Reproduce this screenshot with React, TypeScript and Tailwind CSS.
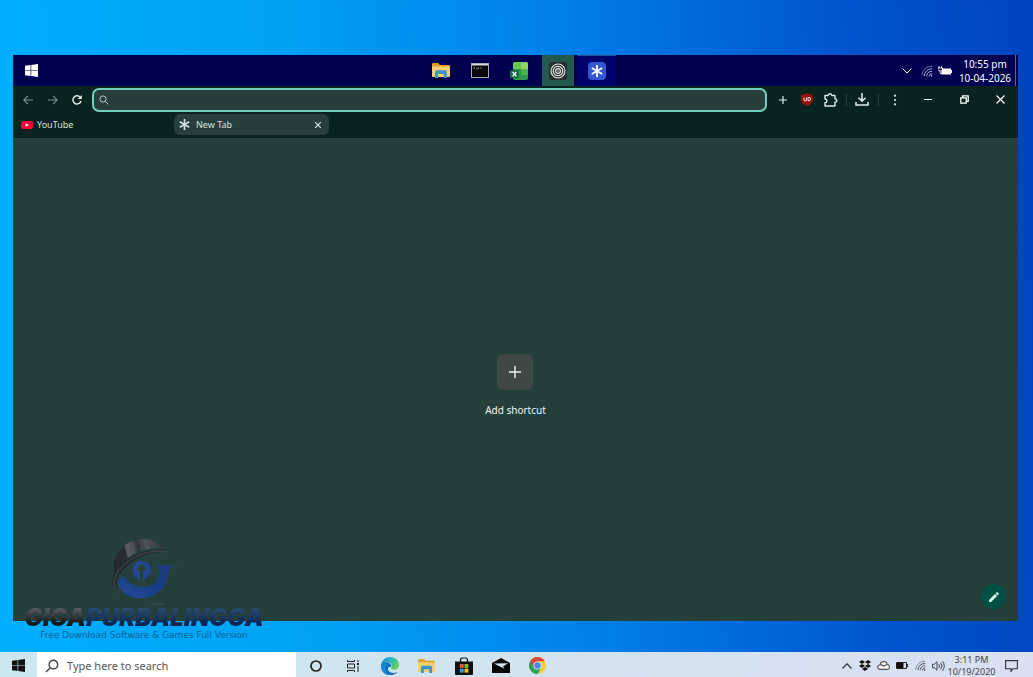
import React from "react";

type IconProps = { className?: string };

function WindowsLogo({ className }: IconProps) {
  return (
    <svg viewBox="0 0 14 14" className={className} fill="currentColor" aria-hidden="true">
      <path d="M0 2 6 1.1V6.6H0ZM6.7 1 14 0V6.6H6.7ZM0 7.3H6V12.8L0 12ZM6.7 7.3H14V14L6.7 12.9Z" />
    </svg>
  );
}

function FolderIcon({ className }: IconProps) {
  return (
    <svg viewBox="0 0 18 15" className={className} aria-hidden="true">
      <path d="M0 1.2Q0 0 1.2 0H6l2 2h9q1 0 1 1v3H0Z" fill="#e0a126" />
      <path d="M0 3.5h18V13q0 1-1 1H1q-1 0-1-1Z" fill="#f8cf70" />
      <path d="M3 15V9q0-1.8 1.8-1.8h8.4Q15 7.200 15 9v6h-3.200v-4H6.200v4Z" fill="#3f95cf" />
    </svg>
  );
}

function TerminalIcon() {
  return (
    <svg viewBox="0 0 18 15" className="h-[15px] w-[18px]" aria-hidden="true">
      <rect x=".5" y=".5" width="17" height="14" fill="#07070a" stroke="#a7acb4" />
      <path d="M1 1h16v1.500H1Z" fill="#d7d9dc" />
      <path d="m2.500 4 1.500 1-1.500 1M5 6h2M7.500 4v2M9 5h2" stroke="#bbb" strokeWidth=".6" fill="none" />
    </svg>
  );
}

function SheetIcon() {
  return (
    <svg viewBox="0 0 18 18" className="size-[18px]" aria-hidden="true">
      <rect x="3" y="0" width="15" height="18" rx="2" fill="#2f9a45" />
      <path d="M5 0h6v7H3V2q0-2 2-2Z" fill="#66cb55" />
      <path d="M11 0h5q2 0 2 2v5h-7Z" fill="#8fd45f" />
      <path d="M11 7h7v6h-7Z" fill="#4cb24b" />
      <rect x="0" y="8" width="9" height="8" rx="1.500" fill="#137045" />
      <path d="m2.600 9.800 3.800 4.600M6.400 9.800l-3.800 4.600" stroke="#fff" strokeWidth="1.300" />
    </svg>
  );
}

function RingsIcon() {
  return (
    <svg viewBox="0 0 18 18" className="size-[18px]" fill="none" aria-hidden="true">
      <rect width="18" height="18" rx="3" fill="#272e2c" />
      <circle cx="9" cy="9" r="7" stroke="#dfe3e1" strokeWidth="1.200" />
      <circle cx="9" cy="9" r="4.700" stroke="#dfe3e1" strokeWidth="1.300" />
      <circle cx="9" cy="9" r="2.400" stroke="#dfe3e1" strokeWidth="1.200" />
      <circle cx="9" cy="9" r=".7" fill="#dfe3e1" />
    </svg>
  );
}

function Asterisk({ className }: IconProps) {
  return (
    <svg viewBox="0 0 12 12" className={className} stroke="currentColor" strokeWidth="1.800" aria-hidden="true">
      <path d="M6 0v12M.8 3l10.400 6M11.200 3 .8 9" />
    </svg>
  );
}

function WifiIcon({ className }: IconProps) {
  return (
    <svg viewBox="0 0 12 12" className={className} fill="none" stroke="currentColor" aria-hidden="true">
      <g strokeWidth=".9">
        <path d="M.8 10.500A10 10 0 0 1 11 1.200" opacity=".6" />
        <path d="M3.200 11A7.500 7.500 0 0 1 11.200 3.800" />
        <path d="M5.600 11.200A5 5 0 0 1 11.200 6.300" />
        <path d="M8 11.300A3 3 0 0 1 11.200 8.600" />
      </g>
      <circle cx="10.500" cy="10.800" r=".8" fill="currentColor" stroke="none" />
    </svg>
  );
}

function SearchIcon({ className }: IconProps) {
  return (
    <svg viewBox="0 0 12 12" className={className} fill="none" stroke="currentColor" strokeWidth="1.200" aria-hidden="true">
      <circle cx="4.800" cy="4.800" r="3.700" />
      <path d="m7.400 7.400 3.800 3.800" />
    </svg>
  );
}

function TitleBar() {
  return (
    <header className="grid h-[31px] shrink-0 grid-cols-[1fr_auto_1fr] bg-[#000050] text-white">
      <div className="flex items-center">
        <button aria-label="Start" className="flex h-full w-9 items-center justify-center">
          <WindowsLogo className="size-[13px]" />
        </button>
      </div>
      <nav aria-label="Pinned apps" className="ml-[6px] flex">
        <button aria-label="Files" className="flex w-[39px] items-center justify-center">
          <FolderIcon className="h-[15px] w-[18px]" />
        </button>
        <button aria-label="Terminal" className="flex w-[39px] items-center justify-center">
          <TerminalIcon />
        </button>
        <button aria-label="Spreadsheet" className="flex w-[39px] items-center justify-center">
          <SheetIcon />
        </button>
        <button aria-label="Browser" className="flex w-[39px] items-center justify-center">
          <span className="flex h-full w-8 items-center justify-center bg-[#245a4d]">
            <RingsIcon />
          </span>
        </button>
        <button aria-label="New window" className="flex w-[39px] items-center justify-center border-t border-[#2b4f8f] bg-[#00006a]">
          <span className="flex size-[18px] items-center justify-center rounded bg-[#3457d5]">
            <Asterisk className="size-3" />
          </span>
        </button>
      </nav>
      <div className="flex items-center justify-end">
        <button aria-label="Hidden icons" className="flex w-6 justify-center">
          <svg viewBox="0 0 10 6" className="h-[6px] w-[10px]" fill="none" stroke="currentColor" aria-hidden="true">
            <path d="m.5.5 4.500 4.500L9.500.5" />
          </svg>
        </button>
        <WifiIcon className="ml-[2px] size-3 text-[#c9c9e4]" />
        <svg viewBox="0 0 14 10" className="ml-[5px] h-[10px] w-[14px]" aria-hidden="true">
          <path d="M4 2.500h9v6H3.500V6" fill="#fff" />
          <path d="M13 4h1v3h-1Z" fill="#fff" />
          <path d="M1 0v2M3.500 0v2M0 2h4.500v1.500Q4 5 2.200 5 .4 5 0 3.500ZM2.200 5v2.500h2" fill="none" stroke="#fff" strokeWidth=".9" />
        </svg>
        <div className="ml-1 w-[58px] text-center text-[10px] leading-[14px] whitespace-nowrap">
          <div>10:55 pm</div>
          <div>10-04-2026</div>
        </div>
        <span className="mr-[2px] ml-px h-full w-px bg-[#63639a]" />
      </div>
    </header>
  );
}

function Toolbar() {
  return (
    <div className="flex h-[27px] shrink-0 items-center bg-[#09231f] text-[#dcebe6]">
      <div className="flex pl-[2px] text-[#7c918b]">
        <button aria-label="Back" className="flex h-6 w-[25px] items-center justify-center">
          <svg viewBox="0 0 10 10" className="size-[10px]" fill="none" stroke="currentColor" strokeWidth="1.200" aria-hidden="true">
            <path d="M10 5H1M5 .8.8 5 5 9.200" />
          </svg>
        </button>
        <button aria-label="Forward" className="flex h-6 w-[25px] items-center justify-center">
          <svg viewBox="0 0 10 10" className="size-[10px]" fill="none" stroke="currentColor" strokeWidth="1.200" aria-hidden="true">
            <path d="M0 5h9M5 .8 9.200 5 5 9.200" />
          </svg>
        </button>
        <button aria-label="Reload" className="flex h-6 w-6 items-center justify-center text-[#e6f1ed]">
          <svg viewBox="0 0 10 10" className="size-[10px]" fill="none" stroke="currentColor" strokeWidth="1.400" aria-hidden="true">
            <path d="M9 6A4.100 4.100 0 1 1 8.300 2.400" />
            <path d="M9.800 0v4H5.800Z" fill="currentColor" stroke="none" />
          </svg>
        </button>
      </div>
      <label className="ml-[3px] flex h-6 flex-1 items-center rounded-[7px] border-2 border-[#73cfbd] bg-[#273e3a] px-[5px] text-[#b6c7c1]">
        <SearchIcon className="size-[10px]" />
        <input
          type="text"
          aria-label="Address and search"
          className="h-full min-w-0 flex-1 bg-transparent px-2 text-[10px] outline-none"
        />
      </label>
      <div className="ml-1 flex items-center">
        <button aria-label="New tab" className="flex size-6 items-center justify-center">
          <svg viewBox="0 0 8 8" className="size-2" stroke="currentColor" aria-hidden="true">
            <path d="M4 0v8M0 4h8" strokeWidth="1.200" />
          </svg>
        </button>
        <button aria-label="Ad blocker" className="flex size-6 items-center justify-center">
          <svg viewBox="0 0 12 13" className="h-[13px] w-3" aria-hidden="true">
            <path d="M6 0Q8.500 1.700 12 2v4.500Q11.500 10.500 6 13 .5 10.500 0 6.500V2Q3.500 1.700 6 0Z" fill="#99100f" />
            <path d="M3 4.500v2.200q0 1.200 1.200 1.200T5.500 6.700V4.500M7 4.500v3.300q2.600.3 2.600-1.600T7 4.500Z" fill="none" stroke="#fff" strokeWidth=".9" />
          </svg>
        </button>
        <button aria-label="Extensions" className="flex size-6 items-center justify-center">
          <svg viewBox="0 0 14 14" className="size-[14px]" fill="none" stroke="currentColor" strokeWidth="1.400" strokeLinejoin="round" aria-hidden="true">
            <path d="M1 2.500h3.200Q4.400.8 6 .8t1.800 1.700H11v3.300q1.800.2 1.800 1.800T11 9.300V13H1V9.800q1.900-.2 1.900-1.900T1 6Z" />
          </svg>
        </button>
        <span className="mx-[3px] h-3 w-px bg-[#29443f]" />
        <button aria-label="Downloads" className="flex size-6 items-center justify-center">
          <svg viewBox="0 0 14 13" className="h-[13px] w-[14px]" fill="none" stroke="currentColor" strokeWidth="1.600" aria-hidden="true">
            <path d="M7 0v8M3.500 4.700 7 8.200l3.500-3.500M1 9v3h12V9" />
          </svg>
        </button>
        <span className="mx-1 h-3 w-px bg-[#29443f]" />
        <button aria-label="Menu" className="flex size-6 items-center justify-center">
          <svg viewBox="0 0 4 12" className="h-3 w-1" fill="currentColor" aria-hidden="true">
            <circle cx="2" cy="1.700" r="1.100" />
            <circle cx="2" cy="6" r="1.100" />
            <circle cx="2" cy="10.300" r="1.100" />
          </svg>
        </button>
      </div>
      <div className="ml-[3px] flex text-white">
        <button aria-label="Minimize" className="flex h-6 w-9 items-center justify-center">
          <span className="h-px w-2 bg-current" />
        </button>
        <button aria-label="Restore" className="flex h-6 w-9 items-center justify-center">
          <svg viewBox="0 0 9 9" className="size-[9px]" fill="none" stroke="currentColor" strokeWidth="1.300" aria-hidden="true">
            <path d="M.8 2.800h5.400v5.400H.8ZM2.600 2.600V.8h5.600v5.600H6.400" />
          </svg>
        </button>
        <button aria-label="Close" className="flex h-6 w-9 items-center justify-center">
          <svg viewBox="0 0 9 9" className="size-[9px]" stroke="currentColor" strokeWidth="1.200" aria-hidden="true">
            <path d="m.5.5 8 8M8.500.5l-8 8" />
          </svg>
        </button>
      </div>
    </div>
  );
}

function TabStrip() {
  return (
    <div className="flex h-[25px] shrink-0 bg-[#09231f] pt-px pb-[3px] text-[9px] text-[#d5e1dd]">
      <button className="flex w-[161px] items-center pl-2">
        <svg viewBox="0 0 12 8" className="h-2 w-3" aria-hidden="true">
          <rect width="12" height="8" rx="2" fill="#f5003d" />
          <path d="m4.700 2.200 3.200 1.800-3.200 1.800Z" fill="#fff" />
        </svg>
        <span className="ml-1">YouTube</span>
      </button>
      <div className="flex w-[155px] items-center rounded-md bg-[#273e3a] pl-[5px]">
        <button className="flex flex-1 items-center">
          <Asterisk className="size-[11px]" />
          <span className="ml-[6px]">New Tab</span>
        </button>
        <button aria-label="Close tab" className="flex h-full w-[22px] items-center justify-center">
          <svg viewBox="0 0 6 6" className="size-[6px]" stroke="currentColor" strokeWidth="1.200" aria-hidden="true">
            <path d="m0 0 6 6M6 0 0 6" />
          </svg>
        </button>
      </div>
    </div>
  );
}

function NewTabPage() {
  return (
    <main className="relative flex flex-1 items-center justify-center border-t border-[#2c433f] bg-[#253f3a]">
      <button className="mt-3 flex flex-col items-center gap-3 text-[10px] leading-4 text-[#f0f5f3]">
        <span className="flex size-9 items-center justify-center rounded-md bg-[#3e4845]">
          <svg viewBox="0 0 12 12" className="size-3" stroke="currentColor" strokeWidth="1.400" aria-hidden="true">
            <path d="M6 0v12M0 6h12" />
          </svg>
        </span>
        Add shortcut
      </button>
      <button
        aria-label="Customize"
        className="absolute right-3 bottom-3 flex size-[25px] items-center justify-center rounded-full bg-[#005144] text-[#d7fff4]"
      >
        <svg viewBox="0 0 10 10" className="size-[10px]" fill="currentColor" aria-hidden="true">
          <path d="M0 8 6 2l2 2-6 6H0ZM6.600 1.400 7.700.3q.4-.4.8 0l1.200 1.200q.4.400 0 .8L8.600 3.400Z" />
        </svg>
      </button>
    </main>
  );
}

function Watermark() {
  return (
    <div className="pointer-events-none absolute bottom-[37px] left-5 flex w-[248px] flex-col items-center">
      <svg viewBox="0 0 74 68" className="h-[68px] w-[74px]" aria-hidden="true">
        <defs>
          <linearGradient id="steel" gradientUnits="userSpaceOnUse" x1="6" y1="20" x2="55" y2="8">
            <stop offset="0" stopColor="#242829" />
            <stop offset=".27" stopColor="#2b2f31" />
            <stop offset=".3" stopColor="#5b5f60" />
            <stop offset=".45" stopColor="#4b4f50" />
            <stop offset=".52" stopColor="#303537" />
            <stop offset=".7" stopColor="#4f5556" />
            <stop offset="1" stopColor="#303b3a" />
          </linearGradient>
          <linearGradient id="royal" x1="0" y1="1" x2="1" y2="0">
            <stop offset="0" stopColor="#254c98" />
            <stop offset=".5" stopColor="#173c86" />
            <stop offset="1" stopColor="#233c7c" />
          </linearGradient>
        </defs>
        <path d="M7 36C5 15 18 2 35 1c9 0 17 4 21 9-20-1-37 6-49 26Z" fill="url(#steel)" />
        <path d="M13 56C2 48 3 36 14 26 27 14 45 9 60 14 43 13 29 19 19 29 9 38 7 47 13 56Z" fill="#252c2d" />
        <path d="M13 56C4 47 6 37 17 27 29 16 44 11 60 14" fill="none" stroke="#566462" strokeWidth=".6" />
        <path d="M16 38c8 13 31 17 36 0 1-6-1-9-3-12 6 1 12 2 23 1q-8 1-10 4c0 15-10 28-26 29-14 1-22-5-25-15 0-3 2-5 5-7Z" fill="url(#royal)" />
        <circle cx="34.500" cy="32" r="9.500" fill="#20468f" />
        <path d="M34.500 25 28 32.500h4.200V42h4.600v-9.500H41Z" fill="#253f3a" stroke="#34579a" strokeWidth=".6" />
        <path d="M44 66h13" stroke="#465553" />
      </svg>
      <div className="font-['Inter',sans-serif] text-[24px] leading-[24px] font-black whitespace-nowrap text-transparent italic">
        <span className="bg-linear-to-b from-[#555a5a] from-20% to-[#16191c] to-70% bg-clip-text">GIGA</span>
        <span className="bg-linear-to-b from-[#2b4a70] from-20% to-[#0c2654] to-70% bg-clip-text">PURBALINGGA</span>
      </div>
      <div className="font-['DejaVu_Sans',sans-serif] text-[9px] leading-[10px] whitespace-nowrap text-[#12618e]">
        Free Download Software &amp; Games Full Version
      </div>
    </div>
  );
}

function PinnedApp({ label, children }: { label: string; children: React.ReactNode }) {
  return (
    <button aria-label={label} className="flex h-full w-[37px] items-center justify-center pt-[2px]">
      {children}
    </button>
  );
}

function Taskbar() {
  return (
    <footer className="flex h-[25px] shrink-0 items-center bg-linear-to-r from-[#cbe7ef] to-[#d9e0f1] text-[#111]">
      <button aria-label="Start menu" className="flex h-full w-[37px] items-center justify-center pt-[2px]">
        <WindowsLogo className="size-[13px]" />
      </button>
      <label className="mr-[1px] flex h-full w-[259px] items-center bg-white pt-[3px] pl-2 text-[#444]">
        <SearchIcon className="size-[14px] -scale-x-100" />
        <input
          type="text"
          placeholder="Type here to search"
          aria-label="Search"
          className="ml-2 min-w-0 flex-1 bg-transparent text-[11px] outline-none placeholder:text-[#555]"
        />
      </label>
      <nav aria-label="Taskbar apps" className="flex h-full flex-1">
        <PinnedApp label="Assistant">
          <svg viewBox="0 0 12 12" className="size-3" fill="none" stroke="#222" strokeWidth="1.700" aria-hidden="true">
            <circle cx="6" cy="6" r="5" />
          </svg>
        </PinnedApp>
        <PinnedApp label="Task view">
          <svg viewBox="0 0 14 12" className="h-3 w-[14px]" fill="none" stroke="#222" aria-hidden="true">
            <path d="M1.500 0v1.500h7V0M1.500 4h7v4h-7ZM1.500 12v-1.500h7V12M12 0v2M12 6v6" />
            <path d="M11 3h2v2h-2Z" fill="#222" stroke="none" />
          </svg>
        </PinnedApp>
        <PinnedApp label="Edge">
          <svg viewBox="0 0 18 18" className="size-[18px]" aria-hidden="true">
            <defs>
              <linearGradient id="wave" x1="0" y1="0" x2="1" y2=".5">
                <stop offset="0" stopColor="#1685cf" />
                <stop offset=".5" stopColor="#24b6c9" />
                <stop offset="1" stopColor="#63cf58" />
              </linearGradient>
            </defs>
            <path d="M0 9C0 4 4 0 9 0s9 3.600 9 8c0 3-2.400 4.700-5 4.700-2.400 0-3.600-1-2.700-2.200C12 7 8 4.500 4.500 5.500 2 6.200.5 7.500 0 9Z" fill="url(#wave)" />
            <path d="M0 9c.5-2.400 3-4.300 6-3.700 3.200.5 4.900 3.200 3.800 5C7 9 6 12 8 14.200c2 2.200 6 2.200 9 .2C15 17 12 18 9 18c-5 0-9-4-9-9Z" fill="#126fbf" />
            <path d="M6 8c-3 3-1.500 8 2 9.900C3.500 18 0 14 0 9c.5-2.400 3-3.800 6-1Z" fill="#1687d2" />
          </svg>
        </PinnedApp>
        <PinnedApp label="File Explorer">
          <FolderIcon className="h-[14px] w-[17px]" />
        </PinnedApp>
        <PinnedApp label="Store">
          <svg viewBox="0 0 18 18" className="size-[18px]" aria-hidden="true">
            <path d="M0 4.500h18V17q0 1-1 1H1q-1 0-1-1Z" fill="#111" />
            <path d="M5.500 5V3q0-2 2-2h3q2 0 2 2v2" fill="none" stroke="#111" strokeWidth="1.200" />
            <path d="M4.800 7h3.900v3.900H4.800Z" fill="#e85532" />
            <path d="M9.500 7h3.900v3.900H9.500Z" fill="#88bd32" />
            <path d="M4.800 11.700h3.900v3.900H4.800Z" fill="#24a2e5" />
            <path d="M9.500 11.700h3.900v3.900H9.500Z" fill="#f9be22" />
          </svg>
        </PinnedApp>
        <PinnedApp label="Mail">
          <svg viewBox="0 0 18 15" className="h-[15px] w-[18px]" aria-hidden="true">
            <path d="M0 5 9 0l9 5v10H0Z" fill="#080808" />
            <path d="m2 5.500 14-.2-5 3.200 1.500 2.200Z" fill="#d5e5ed" />
          </svg>
        </PinnedApp>
        <PinnedApp label="Chrome">
          <svg viewBox="0 0 18 18" className="size-[17px]" aria-hidden="true">
            <circle cx="9" cy="9" r="9" fill="#f8ca35" />
            <path d="M9 9 1.200 4.500A9 9 0 0 0 9 18l4-6.500Z" fill="#25a35a" />
            <path d="M1.200 4.500A9 9 0 0 1 16.800 4.500H9L5.100 11.200Z" fill="#df4737" />
            <circle cx="9" cy="9" r="4.300" fill="#e9f2f7" />
            <circle cx="9" cy="9" r="3.400" fill="#4286e9" />
          </svg>
        </PinnedApp>
      </nav>
      <div className="flex h-full items-center pt-[2px] text-[#303138]">
        <button aria-label="Show hidden icons" className="flex w-[19px] justify-center">
          <svg viewBox="0 0 10 6" className="h-[6px] w-[10px]" fill="none" stroke="currentColor" strokeWidth="1.200" aria-hidden="true">
            <path d="m.5 5.500 4.500-4.700 4.500 4.700" />
          </svg>
        </button>
        <span className="flex w-[18px] justify-center">
          <svg viewBox="0 0 12 11" className="h-[11px] w-3" fill="#111" aria-hidden="true">
            <path d="m3 0 3 2-3 2-3-2ZM9 0l3 2-3 2-3-2ZM3 4l3 2-3 2-3-2ZM9 4l3 2-3 2-3-2ZM6 7l3 2-3 2-3-2Z" />
          </svg>
        </span>
        <span className="flex w-[18px] justify-center">
          <svg viewBox="0 0 13 9" className="h-[9px] w-[13px]" fill="#f6f6ef" stroke="#55575a" strokeWidth="1.100" aria-hidden="true">
            <path d="M3 8.400Q.6 8 .6 6.100T3 4Q3.500.6 6.700.6T10 3.500q2.400 0 2.400 2.500T10 8.400Z" />
            <path d="M3 4q2-.5 3.500 1L10 3.500" fill="none" />
          </svg>
        </span>
        <span className="flex w-[19px] justify-center">
          <svg viewBox="0 0 12 7" className="h-[7px] w-3" aria-hidden="true">
            <path d="M.5.5h10v6H.5ZM11 2.500h1v2h-1Z" fill="none" stroke="#222" />
            <path d="M1 1h6.500v5H1Z" fill="#111" />
          </svg>
        </span>
        <span className="flex w-[18px] justify-center">
          <WifiIcon className="size-[11px]" />
        </span>
        <span className="flex w-[18px] justify-center">
          <svg viewBox="0 0 13 12" className="h-3 w-[13px]" fill="none" stroke="currentColor" aria-hidden="true">
            <path d="M.5 4.200h2L5 1.800v8.400L2.500 7.800h-2ZM6.800 4q1.400 2 0 4M8.700 2.600q2.500 3.400 0 6.800M10.600 1.200q3.300 4.800 0 9.600" strokeWidth=".9" />
          </svg>
        </span>
        <div className="w-[49px] text-center text-[9px] leading-[12px] whitespace-nowrap text-[#42434a]">
          <div>3:11 PM</div>
          <div>10/19/2020</div>
        </div>
        <button aria-label="Notifications" className="mr-[15px] ml-2 flex w-[14px] justify-center">
          <svg viewBox="0 0 13 12" className="h-3 w-[13px]" fill="none" stroke="currentColor" strokeWidth="1.100" aria-hidden="true">
            <path d="M.6.6h11.800v8.200H8l-2 2.400V8.800H.6Z" />
          </svg>
        </button>
      </div>
    </footer>
  );
}

export default function App() {
  return (
    <div className="relative flex h-screen flex-col bg-linear-[86deg,#00aeff_0%,#00a3f5_28%,#0082ea_54%,#0052cd_84%,#0044bd_100%] font-['Noto_Sans','Open_Sans',sans-serif]">
      <div className="flex min-h-0 flex-1 flex-col pt-[55px] pr-[15px] pb-[31px] pl-[13px]">
        <section aria-label="Browser window" className="flex min-h-0 flex-1 flex-col">
          <TitleBar />
          <Toolbar />
          <TabStrip />
          <NewTabPage />
        </section>
      </div>
      <Watermark />
      <Taskbar />
    </div>
  );
}
